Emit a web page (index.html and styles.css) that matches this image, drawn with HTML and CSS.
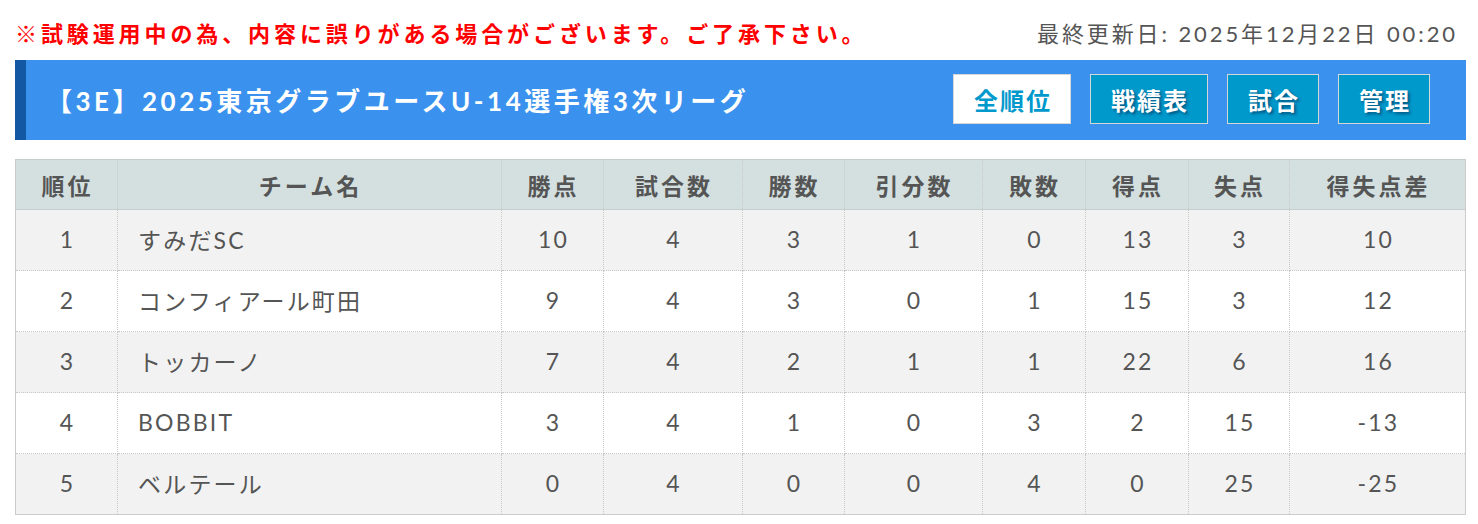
FILE: index.html
```html
<!DOCTYPE html>
<html lang="ja">
<head>
<meta charset="utf-8">
<link rel="stylesheet" href="styles.css">
</head>
<body>
<div class="page">
  <div class="topline">
    <p class="notice">※試験運用中の為、内容に誤りがある場合がございます。ご了承下さい。</p>
    <p class="updated">最終更新日: 2025年12月22日 00:20</p>
  </div>
  <div class="titlebar">
    <h1 class="title">【3E】2025東京グラブユースU-14選手権3次リーグ</h1>
    <nav class="menu">
      <a class="btn active">全順位</a>
      <a class="btn">戦績表</a>
      <a class="btn">試合</a>
      <a class="btn">管理</a>
    </nav>
  </div>
  <table class="standings">
    <colgroup>
      <col class="c-rank"><col class="c-team"><col class="c-pts"><col class="c-games"><col class="c-win"><col class="c-draw"><col class="c-lose"><col class="c-gf"><col class="c-ga"><col class="c-gd">
    </colgroup>
    <thead>
      <tr><th>順位</th><th>チーム名</th><th>勝点</th><th>試合数</th><th>勝数</th><th>引分数</th><th>敗数</th><th>得点</th><th>失点</th><th>得失点差</th></tr>
    </thead>
    <tbody>
      <tr><td>1</td><td class="team">すみだSC</td><td>10</td><td>4</td><td>3</td><td>1</td><td>0</td><td>13</td><td>3</td><td>10</td></tr>
      <tr><td>2</td><td class="team">コンフィアール町田</td><td>9</td><td>4</td><td>3</td><td>0</td><td>1</td><td>15</td><td>3</td><td>12</td></tr>
      <tr><td>3</td><td class="team">トッカーノ</td><td>7</td><td>4</td><td>2</td><td>1</td><td>1</td><td>22</td><td>6</td><td>16</td></tr>
      <tr><td>4</td><td class="team">BOBBIT</td><td>3</td><td>4</td><td>1</td><td>0</td><td>3</td><td>2</td><td>15</td><td>-13</td></tr>
      <tr><td>5</td><td class="team">ベルテール</td><td>0</td><td>4</td><td>0</td><td>0</td><td>4</td><td>0</td><td>25</td><td>-25</td></tr>
    </tbody>
  </table>
</div>
</body>
</html>
```
FILE: styles.css
```css
* { box-sizing: border-box; }
html, body { margin: 0; padding: 0; background: #fff; }
body {
  font-family: Lato, "Noto Sans CJK JP", sans-serif;
  color: #555;
}
.page {
  padding: 0 12px 0 15px;
}
.topline {
  display: flex;
  justify-content: space-between;
  align-items: center;
  height: 60px;
  padding-top: 6px;
  padding-bottom: 2px;
}
.topline p { margin: 0; }
.notice {
  color: #ff0000;
  font-weight: bold;
  font-size: 22px;
  letter-spacing: 3.9px;
}
.updated {
  font-size: 22px;
  letter-spacing: 2.9px;
  padding-right: 8px;
  color: #555;
}
.titlebar {
  display: flex;
  align-items: center;
  justify-content: space-between;
  height: 80px;
  background: #3a92ee;
  border-left: 11px solid #1358a2;
  padding: 0 36px 2px 20px;
  margin-bottom: 19px;
}
.title {
  margin: 0;
  color: #fff;
  font-size: 26px;
  font-weight: bold;
  letter-spacing: 3.5px;
}
.menu {
  display: flex;
  gap: 19px;
}
.btn {
  display: flex;
  align-items: center;
  justify-content: center;
  height: 50px;
  padding: 0 18px 0 20px;
  background: #0099cc;
  border: 1px solid #d6d6d6;
  color: #fff;
  font-size: 24px;
  font-weight: bold;
  letter-spacing: 2px;
  text-shadow: 2px 2px 3px rgba(0, 40, 80, 0.6);
}
.btn.active {
  background: #fff;
  color: #0099cc;
  text-shadow: none;
}
.standings {
  width: 100%;
  table-layout: fixed;
  border-collapse: collapse;
  border: 1px solid #ccc;
}
.c-rank { width: 102px; }
.c-team { width: 384px; }
.c-pts { width: 102px; }
.c-games { width: 139px; }
.c-win { width: 102px; }
.c-draw { width: 138px; }
.c-lose { width: 103px; }
.c-gf { width: 103px; }
.c-ga { width: 101px; }
.c-gd { width: auto; }
.standings th, .standings td {
  border: 1px dotted #c8c8c8;
  text-align: center;
  font-size: 23px;
  color: #555;
  padding: 0 0 0 2px;
  letter-spacing: 2.2px;
}
.standings th {
  height: 50px;
  background: #d4e0e0;
  font-weight: bold;
  border-bottom: 1px solid #c4cccc;
  border-top: 1px solid #c4cccc;
  padding-top: 1px;
  letter-spacing: 3px;
}
.standings td {
  height: 61px;
  padding-bottom: 3px;
}
.standings tbody tr:nth-child(odd) td { background: #f2f2f2; }
.standings tbody tr:nth-child(even) td { background: #fff; }
.standings td.team {
  text-align: left;
  padding-left: 20px;
}
```
